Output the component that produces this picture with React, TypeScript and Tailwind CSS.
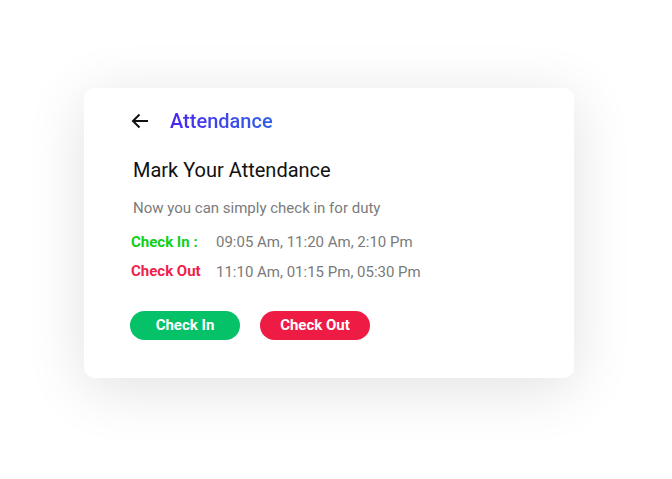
const rows = [
  { label: 'Check In :', color: 'text-[#0fcf16]', times: '09:05 Am, 11:20 Am, 2:10 Pm', shift: '' },
  { label: 'Check Out', color: 'text-[#ef1f4b]', times: '11:10 Am, 01:15 Pm, 05:30 Pm', shift: '-translate-y-[1px] -ml-px' },
]

function BackArrow() {
  return (
    <svg width="18" height="16" viewBox="0 0 18 16" fill="none" stroke="#111" strokeWidth="2">
      <path d="M17 8H2" />
      <path d="M8.5 1.5 2 8l6.5 6.5" />
    </svg>
  )
}

export default function App() {
  return (
    <div className="min-h-[479px] w-[672px] bg-white pt-[88px] pl-[84px] font-['Roboto',sans-serif]">
      <div className="w-[490px] rounded-[10px] bg-white pt-[19px] pb-[38px] pl-[46px] shadow-[0_10px_60px_rgba(0,0,0,0.12)]">
        <div className="flex h-7 items-center">
          <div className="ml-[1px] flex w-[39px]">
            <BackArrow />
          </div>
          <h1 className="bg-gradient-to-r from-[#4a22ee] to-[#2d5fe2] bg-clip-text text-[20px] font-medium leading-7 text-transparent">
            Attendance
          </h1>
        </div>

        <h2 className="mt-[23px] ml-[3px] text-[20px] leading-6 text-[#111]">Mark Your Attendance</h2>
        <p className="mt-4 ml-[3px] text-[15px] leading-5 text-[#7b7b7b]">Now you can simply check in for duty</p>

        <div className="mt-[14px] flex flex-col gap-[10px]">
          {rows.map((r) => (
            <div key={r.label} className="flex h-5 items-center text-[15px] leading-5">
              <span className={`ml-px w-[85px] font-bold ${r.color} ${r.shift}`}>{r.label}</span>
              <span className="text-[#7a7a7a]">{r.times}</span>
            </div>
          ))}
        </div>

        <div className="mt-[29px] flex gap-5">
          <button className="h-[29px] w-[110px] rounded-full bg-[#05c167] text-[15px] font-bold text-white">Check In</button>
          <button className="h-[29px] w-[110px] rounded-full bg-[#ee1c44] text-[15px] font-bold text-white">Check Out</button>
        </div>
      </div>
    </div>
  )
}
